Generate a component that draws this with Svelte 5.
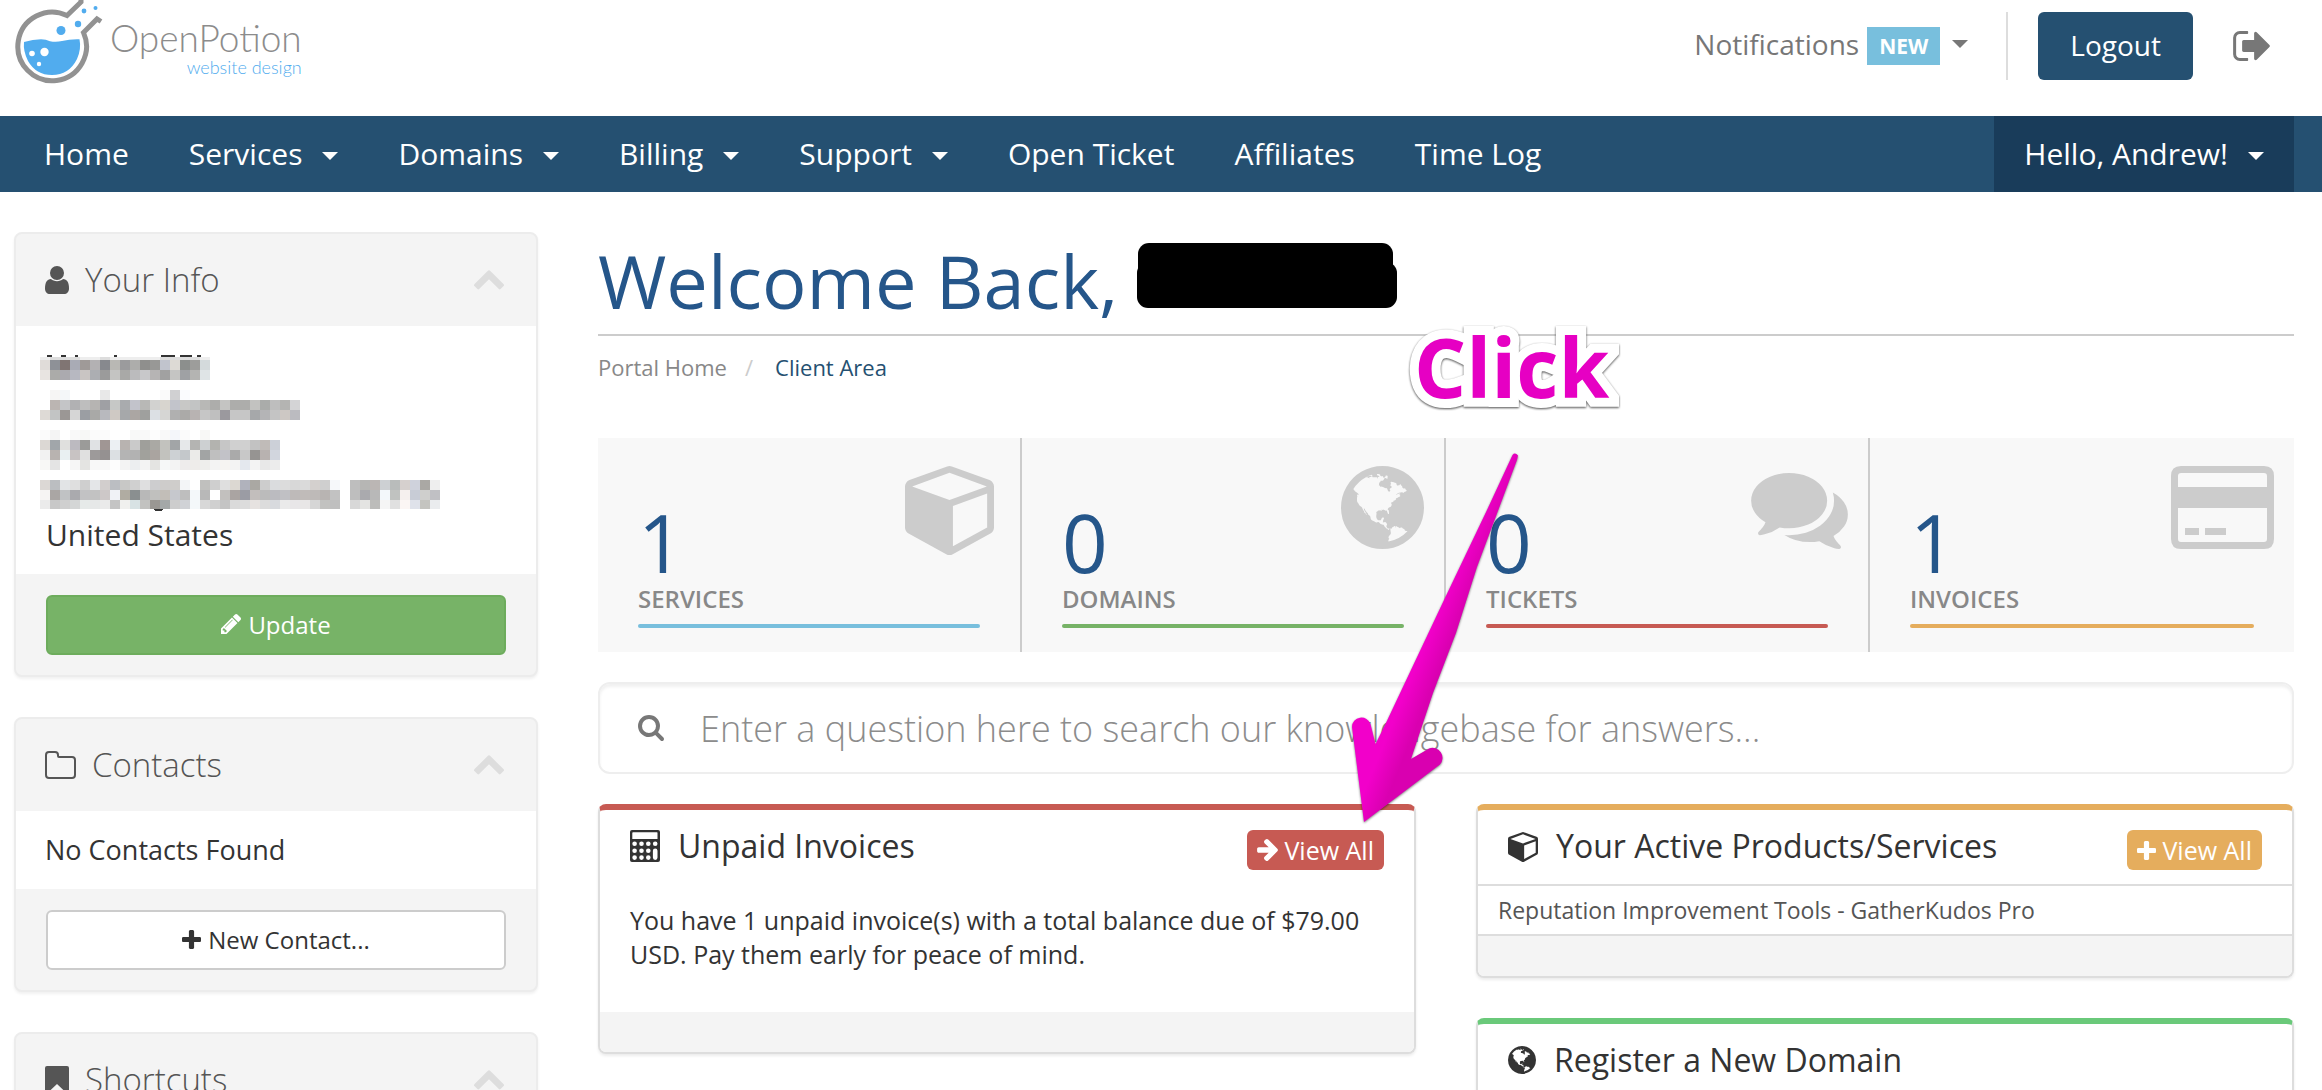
<script lang="ts">
	const icons = {
		chevronUp: {
			box: '90 480 1612 1055',
			d: 'M1683 1331l-166 165q-19 19-45 19t-45-19l-531-531-531 531q-19 19-45 19t-45-19l-166-165q-19-19-19-45.500t19-45.500l742-741q19-19 45-19t45 19l742 741q19 19 19 45.500t-19 45.500z'
		},
		search: {
			box: '64 128 1664 1664',
			d: 'M1216 832q0-185-131.500-316.500t-316.500-131.500-316.500 131.500-131.500 316.500 131.500 316.500 316.500 131.500 316.500-131.500 131.500-316.500zm512 832q0 52-38 90t-90 38q-54 0-90-38l-343-342q-179 124-399 124-143 0-273.500-55.500t-225-150-150-225-55.500-273.500 55.500-273.500 150-225 225-150 273.500-55.500 273.500 55.500 225 150 150 225 55.500 273.500q0 220-124 399l343 343q37 37 37 90z'
		},
		plus: {
			box: '192 128 1408 1408',
			d: 'M1600 736v192q0 40-28 68t-68 28h-416v416q0 40-28 68t-68 28h-192q-40 0-68-28t-28-68v-416h-416q-40 0-68-28t-28-68v-192q0-40 28-68t68-28h416v-416q0-40 28-68t68-28h192q40 0 68 28t28 68v416h416q40 0 68 28t28 68z'
		},
		pencil: {
			box: '128 149 1515 1515',
			d: 'M491 1536l91-91-235-235-91 91v107h128v128h107zm523-928q0-22-22-22-10 0-17 7l-542 542q-7 7-7 17 0 22 22 22 10 0 17-7l542-542q7-7 7-17zm-54-192l416 416-832 832h-416v-416zm683 96q0 53-37 90l-166 166-416-416 166-165q36-38 90-38 53 0 91 38l235 234q37 39 37 91z'
		},
		arrowRight: {
			box: '128 181 1472 1558',
			d: 'M1600 960q0 54-37 91l-651 651q-39 37-91 37-51 0-90-37l-75-75q-38-38-38-91t38-91l293-293h-704q-52 0-84.500-37.500t-32.500-90.500v-128q0-53 32.500-90.500t84.500-37.500h704l-293-294q-38-36-38-90t38-90l75-75q38-38 90-38 53 0 91 38l651 651q37 35 37 90z'
		},
		signOut: {
			box: '64 256 1568 1280',
			d: 'M704 1440q0 4 1 20t.5 26.500-3 23.500-10 19.500-20.500 6.500h-320q-119 0-203.500-84.500t-84.500-203.500v-704q0-119 84.500-203.500t203.500-84.500h320q13 0 22.500 9.500t9.500 22.500q0 4 1 20t.5 26.500-3 23.500-10 19.500-20.500 6.500h-320q-66 0-113 47t-47 113v704q0 66 47 113t113 47h312l11.500 1 11.500 3 8 5.500 7 9 2 13.500zm928-544q0 26-19 45l-544 544q-19 19-45 19t-45-19-19-45v-288h-448q-26 0-45-19t-19-45v-384q0-26 19-45t45-19h448v-288q0-26 19-45t45-19 45 19l544 544q19 19 19 45z'
		},
		cube: {
			box: '0 128 1664 1664',
			d: 'M896 1629l640-349v-636l-640 233v752zm-64-865l698-254-698-254-698 254zm832-252v768q0 35-18 65t-49 47l-704 384q-28 16-61 16t-61-16l-704-384q-31-17-49-47t-18-65v-768q0-40 23-73t61-47l704-256q22-8 44-8t44 8l704 256q38 14 61 47t23 73z'
		},
		comments: {
			box: '0 256 1792 1408',
			d: 'M1408 768q0 139-94 257t-256.500 186.500-353.500 68.500q-86 0-176-16-124 88-278 128-36 9-86 16h-3q-11 0-20.500-8t-11.500-21q-1-3-1-6.500t.5-6.500 2-6l2.500-5 3.500-5.500 4-5 4.500-5 4-4.500q5-6 23-25t26-29.500 22.500-29 25-38.500 20.500-44q-124-72-195-177t-71-224q0-139 94-257t256.500-186.500 353.500-68.500 353.500 68.500 256.500 186.500 94 257zm384 256q0 120-71 224.500t-195 176.500q10 24 20.500 44t25 38.500 22.500 29 26 29.500 23 25q1 1 4 4.500t4.500 5 4 5 3.500 5.500l2.500 5 2 6 .5 6.500-1 6.500q-3 14-13 22t-22 7q-50-7-86-16-154-40-278-128-90 16-176 16-271 0-472-132 58 4 88 4 161 0 309-45t264-129q125-92 192-212t67-254q0-77-23-152 129 71 204 178t75 230z'
		},
		globe: {
			box: '128 128 1536 1536',
			d: 'M896 128q209 0 385.500 103t279.500 279.500 103 385.500-103 385.500-279.500 279.500-385.500 103-385.500-103-279.500-279.500-103-385.500 103-385.500 279.500-279.500 385.500-103zm274 521q-2 1-9.500 9.500t-13.500 9.500q2 0 4.500-5t5-11 3.500-7q6-7 22-15 14-6 52-12 34-8 51 11-2-2 9.500-13t14.500-12q3-2 15-4.500t15-7.500l2-22q-12 1-17.500-7t-6.500-21q0 2-6 8 0-7-4.500-8t-11.500 1-9 1q-10-3-15-7.500t-8-16.500-4-15q-2-5-9.500-11t-9.500-10q-1-2-2.500-5.500t-3-6.500-4-5.500-5.500-2.500-7 5-7.500 10-4.500 5q-3-2-6-1.500t-4.500 1-4.500 3-5 3.500q-3 2-8.500 3t-8.500 2q15-5-1-11-10-4-16-3 9-4 7.500-12t-8.500-14h5q-1-4-8.500-8.500t-17.500-8.500-13-6q-8-5-34-9.500t-33-.5q-5 6-4.500 10.500t4 14 3.500 12.500q1 6-5.500 13t-6.500 12q0 7 14 15.500t10 21.500q-3 8-16 16t-16 12q-5 8-1.500 18.500t10.500 16.500q2 2 1.500 4t-3.500 4.500-5.500 4-6.500 3.500l-3 2q-11 5-20.500-6t-13.500-26q-7-25-16-30-23-8-29 1-5-13-41-26-25-9-58-4 6-1 0-15-7-15-19-12 3-6 4-17.500t1-13.500q3-13 12-23 1-1 7-8.500t9.500-13.500.5-6q35 4 50-11 5-5 11.500-17t10.500-17q9-6 14-5.500t14.500 5.500 14.500 5q14 1 15.500-11t-7.500-20q12 1 3-17-4-7-8-9-12-4-27 5-8 4 2 8-1-1-9.500 10.500t-16.500 17.500-16-5q-1-1-5.500-13.500t-9.500-13.500q-8 0-16 15 3-8-11-15t-24-8q19-12-8-27-7-4-20.500-5t-19.500 4q-5 7-5.500 11.500t5 8 10.500 5.500 11.500 4 8.500 3q14 10 8 14-2 1-8.500 3.500t-11.500 4.500-6 4q-3 4 0 14t-2 14q-5-5-9-17.500t-7-16.500q7 9-25 6l-10-1q-4 0-16 2t-20.500 1-13.500-8q-4-8 0-20 1-4 4-2-4-3-11-9.500t-10-8.500q-46 15-94 41 6 1 12-1 5-2 13-6.500t10-5.500q34-14 42-7l5-5q14 16 20 25-7-4-30-1-20 6-22 12 7 12 5 18-4-3-11.500-10t-14.500-11-15-5q-16 0-22 1-146 80-235 222 7 7 12 8 4 1 5 9t2.500 11 11.500-3q9 8 3 19 1-1 44 27 19 17 21 21 3 11-10 18-1-2-9-9t-9-4q-3 5 .5 18.500t10.500 12.500q-7 0-9.500 16t-2.500 35.500-1 23.500l2 1q-3 12 5.500 34.500t21.500 19.500q-13 3 20 43 6 8 8 9 3 2 12 7.500t15 10 10 10.500q4 5 10 22.500t14 23.500q-2 6 9.500 20t10.500 23q-1 0-2.500 1t-2.500 1q3 7 15.500 14t15.500 13q1 3 2 10t3 11 8 2q2-20-24-62-15-25-17-29-3-5-5.500-15.500t-4.500-14.500q2 0 6 1.500t8.500 3.500 7.500 4 2 3q-3 7 2 17.500t12 18.500 17 19 12 13q6 6 14 19.500t0 13.500q9 0 20 10.500t17 19.500q5 8 8 26t5 24q2 7 8.500 13.500t12.500 9.500l16 8 13 7q5 2 18.500 10.500t21.500 11.500q10 4 16 4t14.500-2.500 13.500-3.500q15-2 29 15t21 21q36 19 55 11-2 1 .5 7.500t8 15.500 9 14.500 5.500 8.500q5 6 18 15t18 15q6-4 7-9-3 8 7 20t18 10q14-3 14-32-31 15-49-18 0-1-2.500-5.500t-4-8.500-2.500-8.500 0-7.500 5-3q9 0 10-3.500t-2-12.500-4-13q-1-8-11-20t-12-15q-5 9-16 8t-16-9q0 1-1.500 5.500t-1.500 6.500q-13 0-15-1 1-3 2.500-17.500t3.500-22.500q1-4 5.500-12t7.500-14.500 4-12.500-4.500-9.500-17.500-2.500q-19 1-26 20-1 3-3 10.500t-5 11.500-9 7q-7 3-24 2t-24-5q-13-8-22.500-29t-9.500-37q0-10 2.500-26.500t3-25-5.500-24.500q3-2 9-9.500t10-10.500q2-1 4.500-1.500t4.500 0 4-1.500 3-6q-1-1-4-3-3-3-4-3 7 3 28.500-1.500t27.500 1.500q15 11 22-2 0-1-2.500-9.500t-.5-13.500q5 27 29 9 3 3 15.500 5t17.500 5q3 2 7 5.500t5.500 4.500 5-.5 8.500-6.500q10 14 12 24 11 40 19 44 7 3 11 2t4.500-9.500 0-14-1.500-12.500l-1-8v-18l-1-8q-15-3-18.500-12t1.500-18.500 15-18.500q1-1 8-3.500t15.500-6.500 12.500-8q21-19 15-35 7 0 11-9-1 0-5-3t-7.500-5-4.500-2q9-5 2-16 5-3 7.500-11t7.500-10q9 12 21 2 7-8 1-16 5-7 20.500-10.500t18.500-9.500q7 2 8-2t1-12 3-12q4-5 15-9t13-5l17-11q3-4 0-4 18 2 31-11 10-11-6-20 3-6-3-9.500t-15-5.500q3-1 11.500-.5t10.500-1.500q15-10-7-16-17-5-43 12zm-163 877q206-36 351-189-3-3-12.500-4.500t-12.500-3.500q-18-7-24-8 1-7-2.500-13t-8-9-12.500-8-11-7q-2-2-7-6t-7-5.500-7.500-4.500-8.500-2-10 1l-3 1q-3 1-5.500 2.500t-5.500 3-4 3 0 2.500q-21-17-36-22-5-1-11-5.500t-10.500-7-10-1.500-11.500 7q-5 5-6 15t-2 13q-7-5 0-17.500t2-18.500q-3-6-10.500-4.500t-12 4.500-11.500 8.500-9 6.500-8.500 5.500-8.500 7.500q-3 4-6 12t-5 11q-2-4-11.500-6.500t-9.500-5.500q2 10 4 35t5 38q7 31-12 48-27 25-29 40-4 22 12 26 0 7-8 20.500t-7 21.500q0 6 2 16z'
		},
		card: {
			box: '0 0 103 83',
			d: 'M10 0H93Q103 0 103 10V73Q103 83 93 83H10Q0 83 0 73V10Q0 0 10 0ZM10 7Q7 7 7 10V21H96V10Q96 7 93 7ZM7 42V73Q7 76 10 76H93Q96 76 96 73V42ZM14 62H28V69H14ZM34 62H55V69H34Z'
		},
		calculator: {
			box: '0 0 30 32',
			d: 'M2 0H28Q30 0 30 2V30Q30 32 28 32H2Q0 32 0 30V2Q0 0 2 0ZM3 2.300Q2.300 2.300 2.300 3V9H27.500V3Q27.500 2.300 27 2.300ZM2.300 13.700a2.300 2.300 0 1 0 4.600 0a2.300 2.300 0 1 0-4.600 0ZM9.200 13.700a2.300 2.300 0 1 0 4.600 0a2.300 2.300 0 1 0-4.600 0ZM16 13.700a2.300 2.300 0 1 0 4.600 0a2.300 2.300 0 1 0-4.600 0ZM22.900 13.700a2.300 2.300 0 1 0 4.600 0a2.300 2.300 0 1 0-4.600 0ZM2.300 20.700a2.300 2.300 0 1 0 4.600 0a2.300 2.300 0 1 0-4.600 0ZM9.200 20.700a2.300 2.300 0 1 0 4.600 0a2.300 2.300 0 1 0-4.600 0ZM16 20.700a2.300 2.300 0 1 0 4.600 0a2.300 2.300 0 1 0-4.600 0ZM2.300 27.600a2.300 2.300 0 1 0 4.600 0a2.300 2.300 0 1 0-4.600 0ZM9.200 27.600a2.300 2.300 0 1 0 4.600 0a2.300 2.300 0 1 0-4.600 0ZM16 27.600a2.300 2.300 0 1 0 4.600 0a2.300 2.300 0 1 0-4.600 0ZM22.900 20.700a2.300 2.300 0 1 1 4.600 0V27.600a2.300 2.300 0 1 1-4.600 0Z'
		},
		user: {
			box: '0 0 24 28',
			d: 'M12 0a7 7 0 0 1 0 14a7 7 0 0 1 0-14ZM6 13C2 13 0 16.500 0 22.500C0 26 2 28 5 28H19C22 28 24 26 24 22.500C24 16.500 22 13 18 13C16.500 14.300 14.500 15.200 12 15.200S7.500 14.300 6 13Z'
		},
		folder: {
			box: '0 0 31 28',
			d: 'M4 0H10Q14 0 14 4V5H27Q31 5 31 9V24Q31 28 27 28H4Q0 28 0 24V4Q0 0 4 0ZM4 2Q2 2 2 4V24Q2 26 4 26H27Q29 26 29 24V9Q29 7 27 7H14Q12 7 12 5V4Q12 2 10 2Z'
		},
		bookmark: {
			box: '0 0 24 28',
			d: 'M2 0H22Q24 0 24 2V26Q24 29 21.500 27L12 18L2.500 27Q0 29 0 26V2Q0 0 2 0Z'
		}
	};

	type IconName = keyof typeof icons;

	const menu = [
		{ label: 'Home' },
		{ label: 'Services', dropdown: true },
		{ label: 'Domains', dropdown: true },
		{ label: 'Billing', dropdown: true },
		{ label: 'Support', dropdown: true },
		{ label: 'Open Ticket' },
		{ label: 'Affiliates' },
		{ label: 'Time Log' }
	];

	const tiles: { value: number; label: string; icon: IconName; width: number; height: number; tone: string }[] = [
		{ value: 1, label: 'SERVICES', icon: 'cube', width: 89, height: 89, tone: 'info' },
		{ value: 0, label: 'DOMAINS', icon: 'globe', width: 83, height: 83, tone: 'success' },
		{ value: 0, label: 'TICKETS', icon: 'comments', width: 97, height: 76, tone: 'danger' },
		{ value: 1, label: 'INVOICES', icon: 'card', width: 103, height: 83, tone: 'warning' }
	];

	// Pixelated address lines: y, height, first column, then one colour for each 10px cell
	const mosaic: [number, number, number, string][] = [
		[15, 3, 0, 'eee ddd ddd ddd eee eee ddd eee eee eee eee eee ddd ddd ddd ddd eee'],
		[18, 10, 0, 'e0dcd9 8e9197 807573 a9abb5 9f9a98 b3b1b3 87898e b9b8b4 9b9b9d adadab 8f8f8d 989896 c1c4cd dddad5 8c8f8d 9d9d9b d4dadc'],
		[28, 10, 0, 'e8e4e1 ababa9 abaaaf b7b8c1 c9c5c3 acaeb2 9b9b9b c4c4c2 a9a9a7 bbbbbd c8c8ca b6b4b4 a1a1a1 c5c5c3 9fa1a4 b4b4b2 dfe4e6'],
		[48, 10, 1, 'f6f5f4 f4f7f9 fff fff fff e8e8e8 fff fff fff fff fff fafafa d0d0d2 fafbfe'],
		[58, 10, 1, 'bbb5b2 c4c5c7 b1b1b3 bebebe b6b4b2 9fa0a4 c6c8c6 a9abae c2c3cb b8b8b6 d2d2d0 d8d5cf c2c4cb c8c8c6 c2c4c4 b8b8b6 adadab c4c4c2 adadab adadab c2c2c0 aaacaa bebebe b4b4b2 d4d4d6'],
		[68, 10, 0, 'dedad6 c2c4c4 9b9795 d6d6d6 9b9ea3 a9a9a7 b8b9be cfc9c4 a6a8aa aba6a3 9fa09e dce0e4 d6d6d4 b0b0b0 abaaa8 b8b3b2 c6c6c6 bfbfbf 9b999e c6c6c6 c6c6c6 a6a8aa b4b4b6 c4c4c4 cdc8c4 bbbbc0'],
		[88, 10, 0, 'fbfbfb f4f4f4 fff f9f9f9 f7f8f6 fbfbfb fbfbfb fff fff f8f9f8 f9f9f9 fdfdfd f9f9f9 f4f6fa fbfbfb fff f8f8f6'],
		[98, 10, 0, 'dcd8d4 a1a6aa e0e0de bcbac0 9b9b99 e0e2e4 a09694 ecf0f3 b8b3b0 cacaca 9f9f9b aaa9a4 c2c2be a2a5a7 e6e8ea b4b4b2 cdd0d2 b3b3af c6c6c6 d0d0d0 d0d0d0 c2c2c2 c0bbb8 ccd0d8'],
		[108, 10, 0, 'f2f2f2 b8b3b0 e9f0f2 c8c3c3 e0e0e0 9d9a9a 959191 dce0e3 b4b4b4 b2b2b2 a1a19c aaa4a0 c2c2be cdd1d4 c4c8cb ebebe9 a2a4a4 bfbfbf c2c2c8 aaaaaa c8c8c8 969492 b8b2b0 d2d6de'],
		[118, 10, 0, 'f8f8f6 e4e4e4 fff f6f6f6 e4e4e2 f8f8f8 f8f8f8 fdfdfd f3f3f3 eceef0 f3f3f3 e4e4e2 f6f8f8 f3f3f3 eeecec eeecea eeeeec f3f3f3 f6f4f2 f3f3f3 e4e8ee f3f3f3 e8e8e8 ececec'],
		[138, 10, 0, 'dcd8d5 bbbec1 e2e4e6 dfdfdf cfcfcf e4e6e8 d2cecd bbbec2 c8c8c6 d0d0d0 dfdfe0 cdcdcf cecccb cfcdcb f3f5f7 fff c0c0be cfcfcf dfdfdf dcd8d2 b0b2bc aaa8a3 cdcdcd dadcde dcdcdc d8d8d8 dadada d4d0ce cfcfcf f6f8fa fff bebebe b6b6b4 bbb6b4 cdd0d3 b9bcbb d6d0ce cfd2dc aaa8a4 eeeeee'],
		[148, 10, 0, 'f6f4f3 aaa6a4 c0c2c4 aaaaae c2c2c4 c2c2c2 cdc8c8 f0f2f6 b0aca2 8a8f90 b8b8b8 c0c0be c2beb8 c6c8cd bebebe f4f8fa b8b8b8 fff c2c0be aaa4a2 9b9ca4 c2bebc bbbbbb bbbbc0 c0c0c4 bebab9 c0bbb9 bebab8 b8b4b2 c2c2c2 fff bebebe aaaaae b8b8b8 f3f8fb c0c2c0 f5f0ee c8ccd6 cfcfcd c0c0c4'],
		[158, 9, 0, 'ebebeb c8c8c8 cfcfcf d4d6d6 e6eae9 e6e8e8 eaeaea c4c4c4 f0f0ee d8e2e4 c2c2c0 9a9793 a4a8a8 cdcdcd d0d2d6 f4f8fa d8d8d8 d0d0d0 c4c4c4 dadada dcdcdc e6e2e0 dcdcdc d8dade eaeaea e8e6e8 e8e6e6 d6d6d6 c2c2c0 bfbfbf fff d8d8d8 e4e4e2 bcbcba f5f5f5 e0e0e0 fbf6f4 dfe2ea c4c4c0 eaecee']
	];
</script>

{#snippet icon(name: IconName, width: number, height: number)}
	<svg class="icon" {width} {height} viewBox={icons[name].box} fill="currentColor" fill-rule={name === 'globe' ? 'nonzero' : 'evenodd'} aria-hidden="true">
		<path d={icons[name].d} />
	</svg>
{/snippet}

{#snippet sideHead(name: IconName, width: number, title: string)}
	<header class="side-head">
		{@render icon(name, width, 28)}
		<h2>{title}</h2>
		<button type="button" class="collapse" aria-label="Collapse {title}">{@render icon('chevronUp', 30, 20)}</button>
	</header>
{/snippet}

<div class="portal">
	<header class="topbar">
		<a class="logo" href="/" aria-label="OpenPotion website design">
			<svg width="90" height="88" viewBox="14 0 90 88" fill="none" aria-hidden="true">
				<path d="M81-2V2L67 15.500A34.300 34.300 0 1 0 83.500 32.500L97 19L101 21.500" stroke="#929292" stroke-width="5" />
				<path d="M24 42Q33 39.500 41 39.300Q46 39.500 50 41.200Q56 42.500 62 41Q70 39 79.500 39.300Q81.500 49 77 59Q69 75 52 75Q36 75 28 61Q23 51 24 42Z" fill="#51acee" />
				<g fill="#51acee">
					<circle cx="61" cy="30.500" r="4.500" />
					<circle cx="78" cy="24" r="3.200" />
					<circle cx="84" cy="11" r="2.400" />
					<circle cx="95.500" cy="8" r="2" />
				</g>
				<g fill="#fff">
					<circle cx="44.500" cy="52" r="4.200" />
					<circle cx="32" cy="53.500" r="2.800" />
					<circle cx="39" cy="64" r="2.200" />
				</g>
			</svg>
			<span class="logo-text">
				<span class="logo-name">OpenPotion</span>
				<span class="logo-sub">website design</span>
			</span>
		</a>
		<div class="account">
			<button type="button" class="notifications">
				Notifications <span class="badge">NEW</span><span class="caret"></span>
			</button>
			<div class="account-actions">
				<a class="logout" href="/logout">Logout</a>
				<a class="exit" href="/logout" aria-label="Return">{@render icon('signOut', 37, 30)}</a>
			</div>
		</div>
	</header>

	<nav class="menu">
		{#each menu as item}
			{#if item.dropdown}
				<button type="button">{item.label}<span class="caret"></span></button>
			{:else}
				<a href="/">{item.label}</a>
			{/if}
		{/each}
		<button type="button" class="hello">Hello, Andrew!<span class="caret"></span></button>
	</nav>

	<div class="columns">
		<aside class="sidebar">
			<section class="side-card">
				{@render sideHead('user', 24, 'Your Info')}
				<div class="side-body address">
					<svg class="mosaic" width="400" height="172" role="img" aria-label="Hidden address" shape-rendering="crispEdges">
						<path d="M1 13h5v2H1zM15 13h5v2H15zM29 13h3v2H29zM68 13h3v2H68zM115 13h14v2H115zM134 13h12v2H134zM151 13h4v2H151z" fill="#333" />
						<path d="M107 167h10l-2 2h-6z" fill="#333" />
						{#each mosaic as [y, height, start, cells]}
							{#each cells.split(' ') as color, i}
								<rect x={(start + i) * 10 - 6} {y} width="10" {height} fill="#{color}" />
							{/each}
						{/each}
					</svg>
					<span>United States</span>
				</div>
				<footer class="side-foot">
					<button type="button" class="btn update">{@render icon('pencil', 20, 20)}Update</button>
				</footer>
			</section>

			<section class="side-card">
				{@render sideHead('folder', 31, 'Contacts')}
				<div class="side-body">No Contacts Found</div>
				<footer class="side-foot">
					<button type="button" class="btn">{@render icon('plus', 19, 19)}New Contact...</button>
				</footer>
			</section>

			<section class="side-card">
				{@render sideHead('bookmark', 24, 'Shortcuts')}
			</section>
		</aside>

		<main class="content">
			<h1>
				Welcome Back,
				<svg class="redacted" width="260" height="65" aria-hidden="true">
					<rect x="1" width="255" height="40" rx="11" />
					<rect y="19" width="260" height="46" rx="11" />
				</svg>
			</h1>
			<ol class="breadcrumb">
				<li><a href="/">Portal Home</a></li>
				<li>Client Area</li>
			</ol>

			<div class="tiles">
				{#each tiles as tile}
					<a class="tile" href="/">
						<span class="tile-stat">
							<span class="tile-value">{tile.value}</span>
							<span class="tile-label">{tile.label}</span>
						</span>
						<span class="tile-icon" class:low={tile.icon === 'comments'} class:inset={tile.icon === 'cube'}>{@render icon(tile.icon, tile.width, tile.height)}</span>
						<span class="tile-bar {tile.tone}"></span>
					</a>
				{/each}
			</div>

			<label class="search">
				{@render icon('search', 26, 26)}
				<input type="text" aria-label="Search the knowledgebase" placeholder="Enter a question here to search our knowledgebase for answers..." />
			</label>

			<div class="panels">
				<div class="panel-column">
					<section class="panel danger">
						<header class="panel-head">
							{@render icon('calculator', 30, 32)}
							<h3>Unpaid Invoices</h3>
							<a class="view-all danger" href="/">{@render icon('arrowRight', 21, 22)}View All</a>
						</header>
						<p>You have 1 unpaid invoice(s) with a total balance due of $79.00 USD. Pay them early for peace of mind.</p>
						<footer class="panel-foot"></footer>
					</section>
				</div>
				<div class="panel-column">
					<section class="panel warning">
						<header class="panel-head">
							{@render icon('cube', 30, 34)}
							<h3>Your Active Products/Services</h3>
							<a class="view-all warning" href="/">{@render icon('plus', 19, 19)}View All</a>
						</header>
						<a class="service" href="/">Reputation Improvement Tools - GatherKudos Pro</a>
						<footer class="panel-foot"></footer>
					</section>
					<section class="panel green">
						<header class="panel-head">
							{@render icon('globe', 28, 32)}
							<h3>Register a New Domain</h3>
						</header>
					</section>
				</div>
			</div>

			<div class="hint">
				<span class="hint-text">Click</span>
				<svg class="hint-arrow" width="110" height="380" viewBox="0 138 110 380" aria-hidden="true">
					<defs>
						<linearGradient id="arrow" gradientUnits="userSpaceOnUse" x1="49" y1="421" x2="71" y2="430">
							<stop offset="0" stop-color="#f200ca" />
							<stop offset="1" stop-color="#d900b0" />
						</linearGradient>
					</defs>
					<path d="M24 512L12 417A9.500 9.500 0 0 1 30.500 414L35.500 434L45 415L104 290L147 200L172.500 145Q175 142 178 145.500L177 150L137 257L116 323L93 383L71 449L89 438.500A10 10 0 0 1 100 454.500Z" fill="url(#arrow)" />
				</svg>
			</div>
		</main>
	</div>
</div>

<style>
	:global(body) {
		margin: 0;
		background: #fff;
	}

	.portal {
		height: 100vh;
		overflow: hidden;
		font-family: 'Open Sans', 'Noto Sans', sans-serif;
		font-size: 24px;
		color: #333;
	}

	.portal * {
		box-sizing: border-box;
	}

	a {
		color: inherit;
		text-decoration: none;
	}

	button {
		border: 0;
		padding: 0;
		background: none;
		color: inherit;
		font: inherit;
		cursor: pointer;
	}

	h1, h2, h3, p {
		margin: 0;
		font-weight: 400;
	}

	.icon {
		display: block;
		flex: none;
	}

	.caret {
		border: 8px solid transparent;
		border-top-color: currentColor;
		border-bottom: 0;
	}

	.danger {
		--tone: #c75a53;
	}

	.warning {
		--tone: #e5ad5d;
	}

	.success {
		--tone: #77b367;
	}

	.info {
		--tone: #78bfdd;
	}

	.green {
		--tone: #6ac97a;
	}

	/* top bar */
	.topbar {
		display: flex;
		justify-content: space-between;
		height: 116px;
		padding: 0 28px 0 14px;
	}

	.logo {
		display: flex;
		gap: 6px;
	}

	.logo-text {
		display: flex;
		flex-direction: column;
		padding-top: 18px;
		font-family: Lato, sans-serif;
		font-weight: 300;
		text-align: right;
	}

	.logo-name {
		font-size: 37px;
		line-height: 40px;
		color: #8c8c8c;
	}

	.logo-sub {
		font-size: 18px;
		line-height: 18px;
		color: #51acee;
	}

	.account {
		display: flex;
		align-items: flex-start;
		gap: 38px;
		padding-top: 12px;
		color: #777;
		font-size: 28px;
	}

	.notifications {
		display: flex;
		align-items: center;
		height: 68px;
		padding-bottom: 4px;
	}

	.badge {
		margin: 4px 12px 0 8px;
		padding: 0 12px;
		background: #78bfdd;
		color: #fff;
		font-size: 21px;
		font-weight: 700;
		line-height: 38px;
	}

	.account-actions {
		display: flex;
		align-items: center;
		height: 68px;
		padding-left: 30px;
		border-left: 2px solid #ddd;
	}

	.logout {
		padding: 0 32px 2px;
		border-radius: 6px;
		background: #255071;
		color: #fff;
		line-height: 66px;
	}

	.exit {
		padding: 0 24px 0 40px;
	}

	/* menu */
	.menu {
		display: flex;
		height: 76px;
		padding: 0 28px 0 14px;
		background: #255071;
		color: #fff;
		font-size: 30px;
	}

	.menu a,
	.menu button {
		display: flex;
		align-items: center;
		gap: 20px;
		padding: 0 30px;
		line-height: 74px;
	}

	.menu .caret {
		margin-top: 4px;
	}

	.menu .hello {
		margin-left: auto;
		background: #193c5a;
	}

	/* sidebar */
	.columns {
		display: flex;
		gap: 60px;
		padding: 40px 28px 0 14px;
	}

	.sidebar {
		flex: 0 0 524px;
	}

	.side-card {
		margin-bottom: 40px;
		border: 2px solid #ececec;
		border-radius: 8px;
		background: #f4f4f4;
		box-shadow: 0 2px 3px rgba(0, 0, 0, 0.06);
	}

	.side-head {
		display: flex;
		align-items: center;
		gap: 16px;
		height: 92px;
		padding: 0 32px 0 29px;
		color: #555;
	}

	.side-head h2 {
		font-size: 33px;
		font-weight: 300;
		line-height: 40px;
	}

	.collapse {
		margin-left: auto;
		color: #ddd;
	}

	.side-body {
		padding: 20px 29px;
		background: #fff;
		font-size: 27px;
		line-height: 38px;
	}

	.side-body.address {
		padding: 16px 30px 18px;
		font-size: 30px;
		line-height: 42px;
	}

	.mosaic {
		display: block;
		overflow: visible;
	}

	.side-foot {
		padding: 21px 30px 20px;
	}

	.btn {
		display: flex;
		align-items: center;
		justify-content: center;
		gap: 7px;
		width: 100%;
		height: 60px;
		padding-bottom: 2px;
		border: 2px solid #ccc;
		border-radius: 6px;
		background: #fff;
		font-size: 24px;
	}

	.btn.update {
		border-color: #6dac5c;
		background: #77b367;
		color: #fff;
	}

	/* content */
	.content {
		position: relative;
		flex: 1;
		min-width: 0;
	}

	h1 {
		display: flex;
		align-items: center;
		gap: 19px;
		height: 104px;
		padding-bottom: 4px;
		border-bottom: 2px solid #ccc;
		color: #25568a;
		font-size: 74px;
		line-height: 96px;
	}

	.redacted {
		flex: none;
		margin-bottom: 12px;
	}

	.breadcrumb {
		display: flex;
		margin: 0;
		padding: 15px 0 39px;
		list-style: none;
		color: #255071;
		font-size: 22px;
		line-height: 32px;
	}

	.breadcrumb li + li::before {
		content: '/';
		padding: 0 22px 0 18px;
		color: #ccc;
	}

	.breadcrumb a {
		color: #888;
	}

	.tiles {
		display: grid;
		grid-template-columns: repeat(4, 1fr);
		padding-top: 16px;
	}

	.tile {
		display: grid;
		grid-template-columns: 1fr auto;
		grid-template-rows: 158px 4px;
		padding: 28px 40px 24px;
		border-right: 2px solid #ccc;
		background: #f8f8f8;
	}

	.tile:last-child {
		border-right: 0;
	}

	.tile-stat {
		display: flex;
		flex-direction: column;
		justify-content: flex-end;
	}

	.tile-value {
		color: #25568a;
		font-size: 80px;
		line-height: 80px;
	}

	.tile-label {
		padding-bottom: 8px;
		color: #888;
		font-weight: 600;
		line-height: 34px;
	}

	.tile-icon {
		margin-right: -20px;
		color: #ccc;
	}

	.tile-icon.low {
		margin-top: 7px;
	}

	.tile-icon.inset {
		margin-right: -14px;
	}

	.tile-bar {
		grid-column: 1 / -1;
		border-radius: 2px;
		background: var(--tone);
	}

	.search {
		display: flex;
		align-items: center;
		gap: 36px;
		height: 92px;
		margin: 30px 0;
		padding: 0 38px;
		border: 2px solid #eee;
		border-radius: 12px;
		box-shadow: inset 0 3px 3px rgba(0, 0, 0, 0.06);
		color: #777;
	}

	.search input {
		flex: 1;
		min-width: 0;
		border: 0;
		padding: 0;
		background: none;
		color: #555;
		font: inherit;
		font-size: 36px;
		font-weight: 300;
		outline: 0;
	}

	.search input::placeholder {
		color: #8c8c8c;
		opacity: 1;
	}

	.panels {
		display: grid;
		grid-template-columns: 1fr 1fr;
		gap: 60px;
	}

	.panel {
		margin-bottom: 40px;
		border: 2px solid #ddd;
		border-top: 6px solid var(--tone);
		border-radius: 8px;
		background: #fff;
		box-shadow: 0 2px 3px rgba(0, 0, 0, 0.08);
	}

	.panel-head {
		display: flex;
		align-items: flex-start;
		gap: 18px;
		min-height: 74px;
		padding: 20px 30px 14px;
	}

	.panel-head h3 {
		font-size: 32px;
		line-height: 32px;
	}

	.view-all {
		display: flex;
		align-items: center;
		gap: 6px;
		height: 40px;
		margin-left: auto;
		padding: 0 10px;
		border-radius: 6px;
		background: var(--tone);
		color: #fff;
		font-size: 25px;
		line-height: 38px;
	}

	.panel p {
		padding: 19px 30px 41px;
		font-size: 25px;
		line-height: 34px;
	}

	.service {
		display: block;
		padding: 0 20px;
		border: solid #ddd;
		border-width: 2px 0;
		color: #555;
		font-size: 23px;
		line-height: 48px;
	}

	.panel-foot {
		height: 40px;
		background: #f4f4f4;
		border-radius: 0 0 6px 6px;
	}

	/* pointer laid over the page */
	.hint {
		position: absolute;
		top: 78px;
		left: calc(50% - 106px);
		display: flex;
		flex-direction: column;
		pointer-events: none;
	}

	.hint-text {
		padding: 0 0 26px 74px;
		color: #e600c3;
		font-size: 82px;
		font-weight: 700;
		line-height: 112px;
		-webkit-text-stroke: 18px #fff;
		paint-order: stroke fill;
		stroke-linejoin: round;
		filter: drop-shadow(0 1px 1px rgba(0, 0, 0, 0.7));
	}

	.hint-arrow {
		overflow: visible;
		filter: drop-shadow(0 1px 1px rgba(0, 0, 0, 0.5));
	}
</style>
